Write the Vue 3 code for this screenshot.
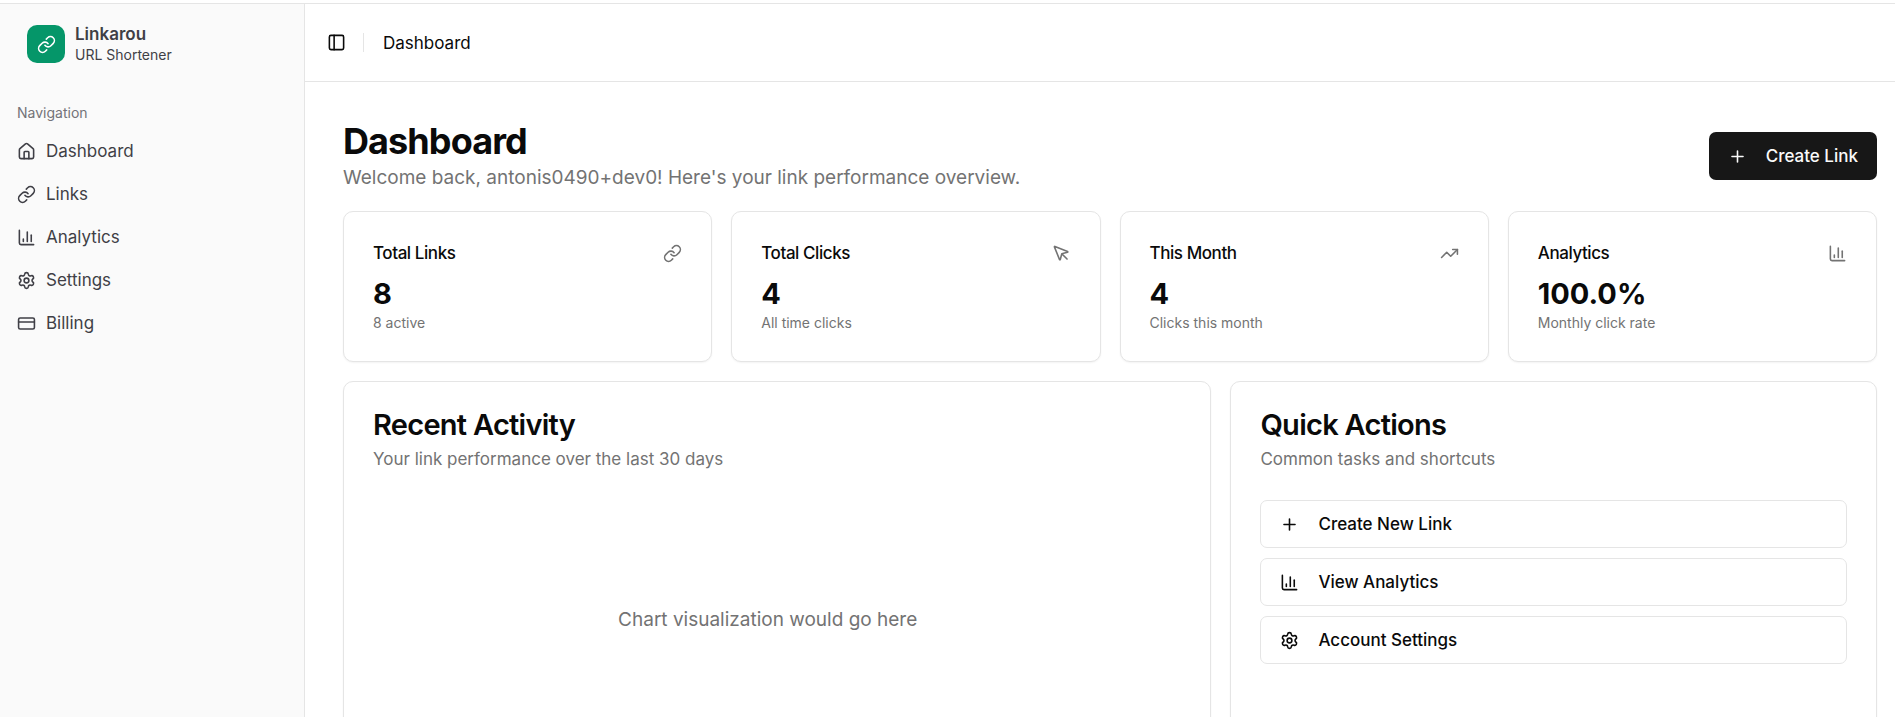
<script setup>
import { h } from 'vue';

const icons = {
  link: [
    'M10 13a5 5 0 0 0 7.54.54l3-3a5 5 0 0 0-7.07-7.07l-1.72 1.71',
    'M14 11a5 5 0 0 0-7.54-.54l-3 3a5 5 0 0 0 7.07 7.07l1.71-1.71',
  ],
  home: [
    'M15 21v-8a1 1 0 0 0-1-1h-4a1 1 0 0 0-1 1v8',
    'M3 10a2 2 0 0 1 .709-1.528l7-5.999a2 2 0 0 1 2.582 0l7 5.999A2 2 0 0 1 21 10v9a2 2 0 0 1-2 2H5a2 2 0 0 1-2-2z',
  ],
  chart: ['M3 3v16a2 2 0 0 0 2 2h16', 'M18 17V9', 'M13 17V5', 'M8 17v-3'],
  settings: [
    'M9.671 4.136a2.34 2.34 0 0 1 4.659 0 2.34 2.34 0 0 0 3.319 1.915 2.34 2.34 0 0 1 2.33 4.033 2.34 2.34 0 0 0 0 3.831 2.34 2.34 0 0 1-2.33 4.033 2.34 2.34 0 0 0-3.319 1.915 2.34 2.34 0 0 1-4.659 0 2.34 2.34 0 0 0-3.32-1.915 2.34 2.34 0 0 1-2.33-4.033 2.34 2.34 0 0 0 0-3.831A2.34 2.34 0 0 1 6.35 6.051a2.34 2.34 0 0 0 3.319-1.915',
    'M15 12a3 3 0 1 1-6 0 3 3 0 0 1 6 0z',
  ],
  card: ['M4 5h16a2 2 0 0 1 2 2v10a2 2 0 0 1-2 2H4a2 2 0 0 1-2-2V7a2 2 0 0 1 2-2z', 'M2 10h20'],
  panel: ['M5 3h14a2 2 0 0 1 2 2v14a2 2 0 0 1-2 2H5a2 2 0 0 1-2-2V5a2 2 0 0 1 2-2z', 'M9 3v18'],
  pointer: [
    'M12.586 12.586 19 19',
    'M3.688 3.037a.497.497 0 0 0-.651.651l6.5 15.999a.501.501 0 0 0 .947-.062l1.569-6.083a2 2 0 0 1 1.448-1.479l6.124-1.579a.5.5 0 0 0 .063-.947z',
  ],
  trending: ['M16 7h6v6', 'm22 7-8.5 8.5-5-5L2 17'],
  plus: ['M5 12h14', 'M12 5v14'],
};

const Icon = (props) =>
  h('svg', { viewBox: '0 0 24 24', class: 'icon', 'aria-hidden': 'true' }, icons[props.name].map((d) => h('path', { d })));
Icon.props = ['name'];

const menuItems = [
  { label: 'Dashboard', icon: 'home', to: '#dashboard' },
  { label: 'Links', icon: 'link', to: '#links' },
  { label: 'Analytics', icon: 'chart', to: '#analytics' },
  { label: 'Settings', icon: 'settings', to: '#settings' },
  { label: 'Billing', icon: 'card', to: '#billing' },
];

const stats = [
  { title: 'Total Links', value: '8', note: '8 active', icon: 'link' },
  { title: 'Total Clicks', value: '4', note: 'All time clicks', icon: 'pointer' },
  { title: 'This Month', value: '4', note: 'Clicks this month', icon: 'trending' },
  { title: 'Analytics', value: '100.0%', note: 'Monthly click rate', icon: 'chart' },
];

const actions = [
  { label: 'Create New Link', icon: 'plus' },
  { label: 'View Analytics', icon: 'chart' },
  { label: 'Account Settings', icon: 'settings' },
];
</script>

<template>
  <div class="layout">
    <aside class="sidebar">
      <a href="#" class="brand">
        <span class="brand-logo"><Icon name="link" /></span>
        <span class="brand-text">
          <span class="brand-name">Linkarou</span>
          <span class="brand-sub">URL Shortener</span>
        </span>
      </a>
      <nav class="menu">
        <div class="menu-label">Navigation</div>
        <a v-for="item in menuItems" :key="item.label" :href="item.to" class="menu-item">
          <Icon :name="item.icon" />
          <span>{{ item.label }}</span>
        </a>
      </nav>
    </aside>

    <div class="page">
      <header class="topbar">
        <button type="button" class="toggle-btn" aria-label="Toggle sidebar"><Icon name="panel" /></button>
        <span class="separator"></span>
        <span class="crumb">Dashboard</span>
      </header>

      <main class="content">
        <div class="page-header">
          <div>
            <h1>Dashboard</h1>
            <p class="welcome">Welcome back, antonis0490+dev0! Here's your link performance overview.</p>
          </div>
          <button type="button" class="btn btn-primary">
            <Icon name="plus" />
            <span>Create Link</span>
          </button>
        </div>

        <section class="stats">
          <article v-for="stat in stats" :key="stat.title" class="card">
            <div class="stat-head">
              <h3>{{ stat.title }}</h3>
              <Icon :name="stat.icon" />
            </div>
            <div class="stat-value">{{ stat.value }}</div>
            <p class="stat-note">{{ stat.note }}</p>
          </article>
        </section>

        <section class="panels">
          <article class="card panel-activity">
            <h2>Recent Activity</h2>
            <p class="card-desc">Your link performance over the last 30 days</p>
            <div class="chart-placeholder">Chart visualization would go here</div>
          </article>
          <article class="card panel-actions">
            <h2>Quick Actions</h2>
            <p class="card-desc">Common tasks and shortcuts</p>
            <div class="action-list">
              <button v-for="action in actions" :key="action.label" type="button" class="btn btn-outline">
                <Icon :name="action.icon" />
                <span>{{ action.label }}</span>
              </button>
            </div>
          </article>
        </section>
      </main>
    </div>
  </div>
</template>

<style>
body {
  margin: 0;
  background: #fff;
}
</style>

<style scoped>
.layout {
  display: flex;
  box-sizing: border-box;
  height: 100vh;
  padding-top: 3px;
  overflow: hidden;
  font-family: Inter, "Liberation Sans", sans-serif;
  font-size: 17px;
  line-height: 24px;
  color: #0a0a0a;
}
h1, h2, h3, p {
  margin: 0;
}
.icon {
  width: 19px;
  height: 19px;
  flex-shrink: 0;
  fill: none;
  stroke: currentColor;
  stroke-width: 2;
  stroke-linecap: round;
  stroke-linejoin: round;
}

/* sidebar */
.sidebar {
  width: 304px;
  flex-shrink: 0;
  background: #fafafa;
  border-top: 1px solid #e5e5e5;
  border-right: 1px solid #e5e5e5;
  color: #3f3f46;
}
.brand {
  display: flex;
  align-items: center;
  gap: 10px;
  padding: 20px 27px 30px;
  color: inherit;
  text-decoration: none;
}
.brand-logo {
  display: flex;
  align-items: center;
  justify-content: center;
  width: 38px;
  height: 38px;
  border-radius: 10px;
  background: #059669;
  color: #fff;
}
.brand-text {
  display: flex;
  flex-direction: column;
}
.brand-name {
  font-weight: 600;
  line-height: 21px;
}
.brand-sub {
  font-size: 14px;
  line-height: 19px;
}
.menu {
  display: flex;
  flex-direction: column;
  gap: 5px;
  padding: 0 7px;
}
.menu-label {
  padding: 0 10px;
  font-size: 14px;
  line-height: 38px;
  margin-bottom: -5px;
  color: #737378;
}
.menu-item {
  display: flex;
  align-items: center;
  gap: 10px;
  height: 38px;
  padding: 0 10px;
  border-radius: 7px;
  color: inherit;
  text-decoration: none;
}
.menu-item:hover {
  background: #f4f4f5;
}

/* top bar */
.page {
  flex: 1;
  min-width: 0;
  overflow-y: auto;
  scrollbar-width: none;
  border-top: 1px solid #e5e5e5;
}
.topbar {
  display: flex;
  align-items: center;
  height: 77px;
  padding: 0 14px;
  border-bottom: 1px solid #e5e5e5;
}
.toggle-btn {
  display: flex;
  align-items: center;
  justify-content: center;
  width: 34px;
  height: 34px;
  padding: 0;
  border: none;
  border-radius: 7px;
  background: none;
  color: inherit;
  cursor: pointer;
}
.separator {
  width: 1px;
  height: 19px;
  margin: 0 19px 0 10px;
  background: #e5e5e5;
}

/* content */
.content {
  display: flex;
  flex-direction: column;
  gap: 19px;
  padding: 38px 18px 38px 38px;
}
.page-header {
  display: flex;
  align-items: center;
  justify-content: space-between;
}
h1 {
  font-size: 36px;
  line-height: 43px;
  font-weight: 700;
  letter-spacing: -0.025em;
}
.welcome {
  font-size: 19px;
  line-height: 29px;
  color: #737373;
}
.btn {
  display: flex;
  align-items: center;
  gap: 19px;
  height: 48px;
  padding: 0 19px;
  border-radius: 7px;
  font-family: inherit;
  font-size: 17px;
  font-weight: 500;
  cursor: pointer;
}
.btn-primary {
  border: none;
  background: #171717;
  color: #fafafa;
}
.btn-outline {
  border: 1px solid #e5e5e5;
  background: #fff;
  color: #0a0a0a;
}
.card {
  padding: 29px;
  border: 1px solid #e5e5e5;
  border-radius: 10px;
  background: #fff;
  box-shadow: 0 1px 2px rgba(0, 0, 0, 0.05);
}
.stats {
  display: grid;
  grid-template-columns: repeat(4, 1fr);
  gap: 19px;
}
.stat-head {
  display: flex;
  align-items: center;
  justify-content: space-between;
  margin-bottom: 10px;
  color: #737373;
}
h3 {
  font-size: 17px;
  line-height: 24px;
  font-weight: 500;
  letter-spacing: -0.025em;
  color: #0a0a0a;
}
.stat-value {
  font-size: 29px;
  line-height: 38px;
  font-weight: 700;
}
.stat-note {
  font-size: 14px;
  line-height: 19px;
  color: #737373;
}
.panels {
  display: grid;
  grid-template-columns: repeat(7, 1fr);
  gap: 19px;
}
.panel-activity {
  grid-column: span 4;
  padding-left: 10px;
}
.panel-activity h2,
.panel-activity .card-desc {
  padding-left: 19px;
}
.panel-actions {
  grid-column: span 3;
}
h2 {
  margin-bottom: 8px;
  font-size: 29px;
  line-height: 28px;
  font-weight: 600;
  letter-spacing: -0.025em;
}
.card-desc {
  margin-bottom: 29px;
  color: #737373;
}
.chart-placeholder {
  display: flex;
  align-items: center;
  justify-content: center;
  height: 240px;
  font-size: 19px;
  color: #737373;
}
.action-list {
  display: flex;
  flex-direction: column;
  gap: 10px;
}
</style>
